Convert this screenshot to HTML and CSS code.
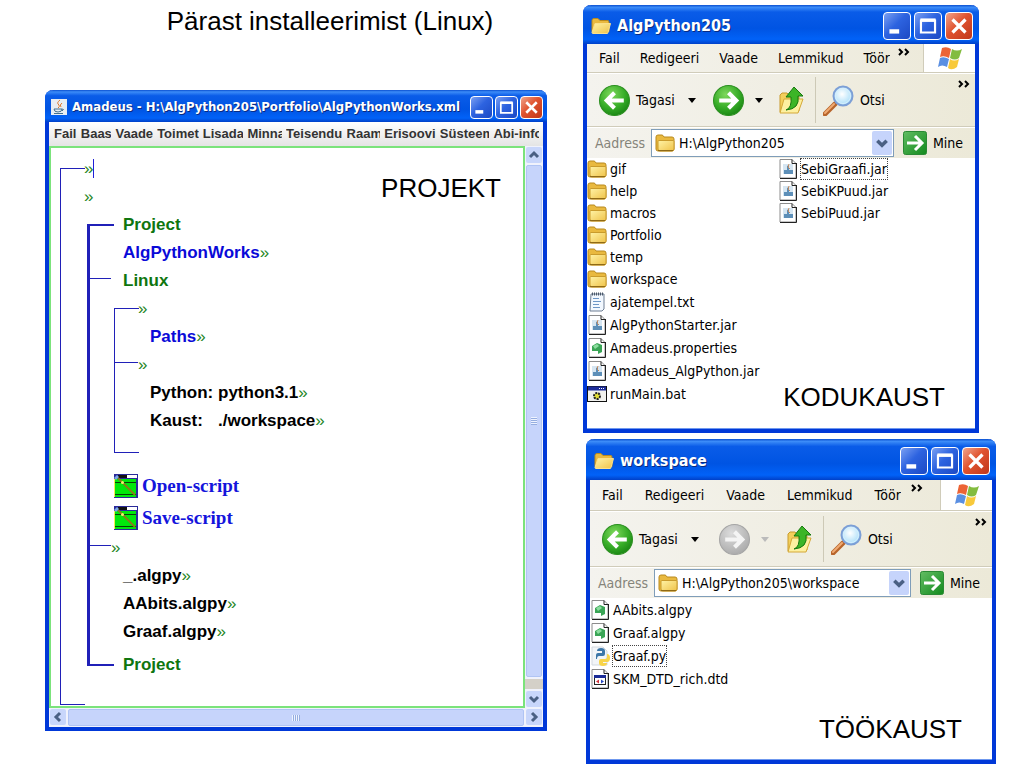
FILE: index.html
```html
<!DOCTYPE html>
<html lang="et">
<head>
<meta charset="utf-8">
<title>Pärast installeerimist (Linux)</title>
<link rel="stylesheet" href="styles.css">
</head>
<body>
<svg class="defs" aria-hidden="true">
  <defs>
    <linearGradient id="gFolder" x1="0" y1="0" x2="1" y2="1"><stop offset="0" stop-color="#fff3a6"/><stop offset="1" stop-color="#efc248"/></linearGradient>
    <radialGradient id="gGreen" cx=".4" cy=".3" r=".75"><stop offset="0" stop-color="#7fd85c"/><stop offset=".6" stop-color="#36ac27"/><stop offset="1" stop-color="#188312"/></radialGradient>
    <radialGradient id="gGrey" cx=".4" cy=".3" r=".75"><stop offset="0" stop-color="#dcdcdc"/><stop offset="1" stop-color="#a9a9a9"/></radialGradient>
    <radialGradient id="gLens" cx=".45" cy=".4" r=".6"><stop offset="0" stop-color="#fff"/><stop offset="1" stop-color="#a5dcf8"/></radialGradient>
    <linearGradient id="gGo" x1="0" y1="0" x2="1" y2="1"><stop offset="0" stop-color="#63bd63"/><stop offset="1" stop-color="#128a1d"/></linearGradient>
  </defs>
  <symbol id="folder" viewBox="0 0 20 18">
    <path d="M1 14V3q0-2 2-2h4q1 0 2 2h8q2 0 2 2v10q0 2-2 2H3q-2 0-2-2z" fill="#e9b93f" stroke="#b98a1e"/>
    <path d="M4 6.500h14q1 0 1 1V15q0 2-2 2H5q-2 0-2-2V7.500q0-1 1-1z" fill="url(#gFolder)" stroke="#c99b2c"/>
    <path d="M3 16.500h15" stroke="#8f6a16"/>
  </symbol>
  <symbol id="openfolder" viewBox="0 0 20 17">
    <path d="M1 14V3q0-2 2-2h4l2 2h8q1 0 1 2v9z" fill="#e9b93f" stroke="#b98a1e"/>
    <path d="M4 6h15.500L17 15q0 1-1 1H2q-1 0-1-1z" fill="url(#gFolder)" stroke="#fbe08b"/>
  </symbol>
  <symbol id="left" viewBox="0 0 30 30">
    <circle cx="15" cy="15" r="14.500" fill="url(#gGreen)" stroke="#2b8f20"/>
    <path d="M24 15H8M15 7.500L7.500 15l7.500 7.500" fill="none" stroke="#fff" stroke-width="4"/>
  </symbol>
  <symbol id="right" viewBox="0 0 30 30">
    <circle cx="15" cy="15" r="14.500" fill="url(#gGreen)" stroke="#2b8f20"/>
    <path d="M6 15h16M15 7.500l7.500 7.500-7.500 7.500" fill="none" stroke="#fff" stroke-width="4"/>
  </symbol>
  <symbol id="rightoff" viewBox="0 0 30 30">
    <circle cx="15" cy="15" r="14.500" fill="url(#gGrey)" stroke="#a5a5a5"/>
    <path d="M6 15h16M15 7.500l7.500 7.500-7.500 7.500" fill="none" stroke="#f4f4f4" stroke-width="4"/>
  </symbol>
  <symbol id="up" viewBox="0 0 26 30">
    <path d="M1 27V10l2-2h5l2 2h8l2 2v14z" fill="#f3cf5c" stroke="#c99b2c"/>
    <path d="M5 14h19l-5 14H1z" fill="#fdf0a0" stroke="#d4a838"/>
    <path d="M7 25q6-2 5-13H7L15 2l9 9h-5q2 13-12 14z" fill="#3cb527" stroke="#17780f"/>
  </symbol>
  <symbol id="search" viewBox="0 0 31 31">
    <path d="M12 19L2 29" stroke="#b8652b" stroke-width="5" stroke-linecap="round"/>
    <path d="M11 19L2 28" stroke="#f0ab73" stroke-width="2" stroke-linecap="round"/>
    <circle cx="20" cy="11" r="9.500" fill="url(#gLens)" stroke="#7c9fd6" stroke-width="2"/>
    <circle cx="20" cy="11" r="7.500" fill="none" stroke="#d6effd"/>
  </symbol>
  <symbol id="go" viewBox="0 0 24 24">
    <rect x=".5" y=".5" width="23" height="23" rx="2" fill="url(#gGo)" stroke="#2b8a35"/>
    <path d="M4 12h14M12 5l7 7-7 7" fill="none" stroke="#fff" stroke-width="3"/>
  </symbol>
  <symbol id="flag" viewBox="0 0 26 24">
    <path d="M5 2q5-2 9 1l-2 9q-5-3-9-1z" fill="#ec6335"/>
    <path d="M15 3q5 3 10 0l-3 9q-4 3-9 0z" fill="#83bc3f"/>
    <path d="M3 12q4-2 9 1l-2 8q-5-3-9 0z" fill="#5a8fe2"/>
    <path d="M13 13q4 3 9 0l-2 8q-5 4-9 1z" fill="#f8c93b"/>
  </symbol>
  <symbol id="jar" viewBox="0 0 18 20">
    <path d="M1 .500h12l4 4V19H1z" fill="#fff" stroke="#8c8c8c"/>
    <path d="M13 .500v4h4M17.500 4v15.500H1" fill="none" stroke="#222"/>
    <rect x="4" y="5" width="10" height="10" fill="#d6e6f2"/>
    <path d="M5 15v-4h3V7l2-1v5h4v4z" fill="#5d8fb8"/>
    <path d="M10 5l-1 3 2 2" fill="none" stroke="#c98a5a"/>
  </symbol>
  <symbol id="prop" viewBox="0 0 18 20">
    <path d="M1 .500h12l4 4V19H1z" fill="#fff" stroke="#8c8c8c"/>
    <path d="M13 .500v4h4M17.500 4v15.500H1" fill="none" stroke="#222"/>
    <path d="M4 8l5-3 5 2v7l-4 2v-3H4z" fill="#3aa556"/>
    <path d="M5 8l4-2 2 2-4 3z" fill="#8cdd9f"/>
  </symbol>
  <symbol id="txt" viewBox="0 0 18 20">
    <path d="M3 2h13v15l-2 2H2z" fill="#f2f8ff" stroke="#6f7f93"/>
    <path d="M4 2h12" stroke="#4b596b" stroke-width="3" stroke-dasharray="1 1"/>
    <path d="M5 6.500h6M5 9.500h8M5 12.500h6M5 15.500h7" stroke="#6d96c6"/>
  </symbol>
  <symbol id="bat" viewBox="0 0 20 18">
    <rect x=".5" y="1.500" width="19" height="15" fill="#f1f1ee" stroke="#111"/>
    <path d="M1 3.500h18" stroke="#1c2c9a" stroke-width="4"/>
    <path d="M12 3.500h6" stroke="#fff" stroke-dasharray="1 1"/>
    <circle cx="10" cy="11" r="3" fill="#e3df36" stroke="#222" stroke-width="2" stroke-dasharray="2 1"/>
  </symbol>
  <symbol id="py" viewBox="0 0 20 20">
    <path d="M2 1h11l4 4v14H2z" fill="#f2f5f8" stroke="#d3d9df"/>
    <path d="M6 13V9q0-2 2-2h4V5H7q0-3 4-3t4 3v3q0 2-2 2H9q-2 0-2 3z" fill="#3d77a8"/>
    <path d="M17 8q3 0 3 4t-3 4h-4v1h4q0 3-4 3t-4-3v-2q0-2 2-2h4q2 0 2-2z" fill="#f8d449"/>
  </symbol>
  <symbol id="dtd" viewBox="0 0 18 20">
    <path d="M1 .500h12l4 4V19H1z" fill="#fff" stroke="#8c8c8c"/>
    <path d="M13 .500v4h4M17.500 4v15.500H1" fill="none" stroke="#222"/>
    <rect x="3.500" y="6.500" width="11" height="9" fill="#fff" stroke="#222"/>
    <path d="M3 7.500h12" stroke="#1b2c97" stroke-width="3"/>
    <path d="M8 10.500l-3 2 3 2z" fill="#d4313b"/><path d="M10 10.500l3 2-3 2z" fill="#2848c0"/>
  </symbol>
  <symbol id="script" viewBox="0 0 24 24">
    <rect width="24" height="24" fill="#2a2a9a"/>
    <rect x="1" y="5" width="21" height="18" fill="#00e80b"/>
    <rect x="4" y="1" width="9" height="3" fill="#111"/>
    <rect x="13" y="1" width="10" height="3" fill="#fff"/>
    <path d="M1 8.500h21M1 20.500h21" stroke="#063f06"/>
    <path d="M.5 5v18" stroke="#f2ef54"/>
    <path d="M4 4l17 17" stroke="#8a7a1c" stroke-width="2"/>
    <path d="M0 4l3-3 2 2-3 3z" fill="#7ca8e8"/><circle cx="8.500" cy="8.500" r="1.500" fill="#f5f36a"/>
  </symbol>
  <symbol id="java" viewBox="0 0 16 16">
    <rect width="16" height="16" fill="#e8eef3"/>
    <path d="M9 1q-4 3-1 5 1 2-1 3M11 4q-3 2-1 4" fill="none" stroke="#e07a2c"/>
    <path d="M3 10h8q0 3-4 3t-4-3zM11 10q3 0 0 2M3 14.500h9" fill="none" stroke="#44708f"/>
  </symbol>
  <symbol id="min" viewBox="0 0 24 24"><rect x="5" y="15" width="9" height="4" fill="#fff"/></symbol>
  <symbol id="max" viewBox="0 0 24 24"><path d="M5.500 7h13v11h-13z" fill="none" stroke="#fff" stroke-width="2"/><path d="M5 6.500h14" stroke="#fff" stroke-width="3"/></symbol>
  <symbol id="close" viewBox="0 0 24 24"><path d="M6 6l12 12M18 6L6 18" stroke="#fff" stroke-width="3"/></symbol>
  <symbol id="chev" viewBox="0 0 12 12"><path d="M2 4l4 4 4-4" fill="none" stroke="#4a6084" stroke-width="3"/></symbol>
  <symbol id="more" viewBox="0 0 12 8"><path d="M1 1l3 3-3 3M7 1l3 3-3 3" fill="none" stroke="#000" stroke-width="2"/></symbol>
  <symbol id="drop" viewBox="0 0 8 5"><path d="M0 0h8L4 5z" fill="currentColor"/></symbol>
</svg>

<main class="slide">
  <section class="left">
    <h1 class="heading">Pärast installeerimist (Linux)</h1>

    <article class="window amadeus">
      <header class="titlebar">
        <svg class="app-icon"><use href="#java"/></svg>
        <h2 class="caption">Amadeus - H:\AlgPython205\Portfolio\AlgPythonWorks.xml</h2>
        <div class="controls">
          <button class="control" aria-label="Minimeeri"><svg><use href="#min"/></svg></button>
          <button class="control" aria-label="Maksimeeri"><svg><use href="#max"/></svg></button>
          <button class="control close" aria-label="Sulge"><svg><use href="#close"/></svg></button>
        </div>
      </header>
      <nav class="app-menu">
        <button>Fail</button><button>Baas</button><button>Vaade</button><button>Toimet</button><button>Lisada</button><button>Minna</button><button>Teisendu</button><button>Raam</button><button>Erisoovi</button><button>Süsteem</button><button>Abi-info</button>
      </nav>
      <div class="workarea">
        <div class="canvas">
          <div class="tree bracket">
            <p class="row at-stub caret"><i>»</i></p>
            <p class="row at-stub"><i>»</i></p>
            <div class="block bracket bold">
              <p class="row key">Project</p>
              <p class="row name">AlgPythonWorks<i>»</i></p>
              <p class="row key stub">Linux</p>
              <div class="block bracket inner">
                <p class="row at-stub"><i>»</i></p>
                <p class="row name">Paths<i>»</i></p>
                <p class="row at-stub stub"><i>»</i></p>
                <p class="row">Python: python3.1<i>»</i></p>
                <p class="row"><span class="term">Kaust:</span>./workspace<i>»</i></p>
              </div>
              <a class="script" href="#open"><svg><use href="#script"/></svg>Open-script</a>
              <a class="script" href="#save"><svg><use href="#script"/></svg>Save-script</a>
              <p class="row at-stub stub"><i>»</i></p>
              <p class="row">_.algpy<i>»</i></p>
              <p class="row">AAbits.algpy<i>»</i></p>
              <p class="row">Graaf.algpy<i>»</i></p>
              <p class="row key last">Project</p>
            </div>
          </div>
          <strong class="label over">PROJEKT</strong>
        </div>
        <div class="scroll vertical">
          <button aria-label="Üles"><svg class="turn-up"><use href="#chev"/></svg></button>
          <span class="thumb"></span>
          <span class="track"></span>
          <button aria-label="Alla"><svg><use href="#chev"/></svg></button>
        </div>
      </div>
      <div class="scroll">
        <button aria-label="Vasakule"><svg class="turn-left"><use href="#chev"/></svg></button>
        <span class="thumb"></span>
        <button aria-label="Paremale"><svg class="turn-right"><use href="#chev"/></svg></button>
      </div>
    </article>
  </section>

  <section class="right">
    <article class="window explorer home">
      <header class="titlebar">
        <svg class="app-icon"><use href="#openfolder"/></svg>
        <h2 class="caption">AlgPython205</h2>
        <div class="controls">
          <button class="control" aria-label="Minimeeri"><svg><use href="#min"/></svg></button>
          <button class="control" aria-label="Maksimeeri"><svg><use href="#max"/></svg></button>
          <button class="control close" aria-label="Sulge"><svg><use href="#close"/></svg></button>
        </div>
      </header>
      <nav class="menu">
        <button>Fail</button><button>Redigeeri</button><button>Vaade</button><button>Lemmikud</button><button class="cut">Tööriistad</button>
        <button class="more" aria-label="Veel"><svg><use href="#more"/></svg></button>
        <span class="brand"><svg><use href="#flag"/></svg></span>
      </nav>
      <div class="toolbar">
        <button class="tool back"><svg class="round"><use href="#left"/></svg>Tagasi<svg class="drop"><use href="#drop"/></svg></button>
        <button class="tool forward" aria-label="Edasi"><svg class="round"><use href="#right"/></svg><svg class="drop"><use href="#drop"/></svg></button>
        <button class="tool up" aria-label="Üles"><svg><use href="#up"/></svg></button>
        <button class="tool search"><svg class="round"><use href="#search"/></svg>Otsi</button>
        <button class="more" aria-label="Veel"><svg><use href="#more"/></svg></button>
      </div>
      <form class="address">
        <label for="path-home">Aadress</label>
        <div class="field"><svg class="file-icon"><use href="#folder"/></svg><input id="path-home" type="text" value="H:\AlgPython205"><button type="button" aria-label="Ava loend"><svg><use href="#chev"/></svg></button></div>
        <button class="go" type="button"><svg><use href="#go"/></svg>Mine</button>
      </form>
      <div class="files">
        <ul class="list">
          <li class="dir"><svg class="file-icon"><use href="#folder"/></svg><span>gif</span></li>
          <li class="dir"><svg class="file-icon"><use href="#folder"/></svg><span>help</span></li>
          <li class="dir"><svg class="file-icon"><use href="#folder"/></svg><span>macros</span></li>
          <li class="dir"><svg class="file-icon"><use href="#folder"/></svg><span>Portfolio</span></li>
          <li class="dir"><svg class="file-icon"><use href="#folder"/></svg><span>temp</span></li>
          <li class="dir"><svg class="file-icon"><use href="#folder"/></svg><span>workspace</span></li>
          <li><svg class="file-icon"><use href="#txt"/></svg><span>ajatempel.txt</span></li>
          <li><svg class="file-icon"><use href="#jar"/></svg><span>AlgPythonStarter.jar</span></li>
          <li><svg class="file-icon"><use href="#prop"/></svg><span>Amadeus.properties</span></li>
          <li><svg class="file-icon"><use href="#jar"/></svg><span>Amadeus_AlgPython.jar</span></li>
          <li><svg class="file-icon"><use href="#bat"/></svg><span>runMain.bat</span></li>
        </ul>
        <ul class="list">
          <li class="dir"><svg class="file-icon"><use href="#jar"/></svg><span class="focused">SebiGraafi.jar</span></li>
          <li class="dir"><svg class="file-icon"><use href="#jar"/></svg><span>SebiKPuud.jar</span></li>
          <li class="dir"><svg class="file-icon"><use href="#jar"/></svg><span>SebiPuud.jar</span></li>
        </ul>
        <strong class="label">KODUKAUST</strong>
      </div>
    </article>

    <article class="window explorer work">
      <header class="titlebar">
        <svg class="app-icon"><use href="#openfolder"/></svg>
        <h2 class="caption">workspace</h2>
        <div class="controls">
          <button class="control" aria-label="Minimeeri"><svg><use href="#min"/></svg></button>
          <button class="control" aria-label="Maksimeeri"><svg><use href="#max"/></svg></button>
          <button class="control close" aria-label="Sulge"><svg><use href="#close"/></svg></button>
        </div>
      </header>
      <nav class="menu">
        <button>Fail</button><button>Redigeeri</button><button>Vaade</button><button>Lemmikud</button><button class="cut">Tööriistad</button>
        <button class="more" aria-label="Veel"><svg><use href="#more"/></svg></button>
        <span class="brand"><svg><use href="#flag"/></svg></span>
      </nav>
      <div class="toolbar">
        <button class="tool back"><svg class="round"><use href="#left"/></svg>Tagasi<svg class="drop"><use href="#drop"/></svg></button>
        <button class="tool forward off" aria-label="Edasi" disabled><svg class="round"><use href="#rightoff"/></svg><svg class="drop"><use href="#drop"/></svg></button>
        <button class="tool up" aria-label="Üles"><svg><use href="#up"/></svg></button>
        <button class="tool search"><svg class="round"><use href="#search"/></svg>Otsi</button>
        <button class="more" aria-label="Veel"><svg><use href="#more"/></svg></button>
      </div>
      <form class="address">
        <label for="path-work">Aadress</label>
        <div class="field"><svg class="file-icon"><use href="#folder"/></svg><input id="path-work" type="text" value="H:\AlgPython205\workspace"><button type="button" aria-label="Ava loend"><svg><use href="#chev"/></svg></button></div>
        <button class="go" type="button"><svg><use href="#go"/></svg>Mine</button>
      </form>
      <div class="files">
        <ul class="list">
          <li><svg class="file-icon"><use href="#prop"/></svg><span>AAbits.algpy</span></li>
          <li><svg class="file-icon"><use href="#prop"/></svg><span>Graaf.algpy</span></li>
          <li><svg class="file-icon"><use href="#py"/></svg><span class="focused">Graaf.py</span></li>
          <li><svg class="file-icon"><use href="#dtd"/></svg><span>SKM_DTD_rich.dtd</span></li>
        </ul>
        <strong class="label">TÖÖKAUST</strong>
      </div>
    </article>
  </section>
</main>
</body>
</html>
```
FILE: styles.css
```css
* { box-sizing: border-box; }
body { margin: 0; background: #fff; color: #000; font: 14px/20px "DejaVu Sans Condensed", "DejaVu Sans", sans-serif; }
h1, h2, p, ul { margin: 0; padding: 0; font-weight: normal; }
button { margin: 0; padding: 0; border: 0; background: none; color: inherit; font: inherit; white-space: nowrap; }
svg { display: block; flex: none; }
.defs { position: absolute; width: 0; height: 0; }

.slide { display: grid; grid-template-columns: minmax(0, 502fr) minmax(0, 413fr); gap: 36px; padding: 5px 28px 4px 45px; }
.heading { padding-left: 68px; margin-bottom: 53px; text-align: center; font: 26px/32px "Liberation Sans", Arial, sans-serif; }
.label { font: 26px/32px "Liberation Sans", Arial, sans-serif; }

/* Window frame */
.window { display: flex; flex-direction: column; background: #fff; border: solid #0038d8; border-width: 0 4px 4px; border-radius: 8px 8px 0 0; box-shadow: inset 0 -1px #6f98ee; }
.titlebar { display: flex; align-items: center; margin: 0 -4px; padding: 0 6px 0 8px; border-radius: 8px 8px 0 0; background: linear-gradient(#0a4fd0, #3c8cf8 6%, #0a5ce8 18%, #0054e3 60%, #0162f8 88%, #0040c8); }
.caption { flex: 1; min-width: 0; overflow: hidden; white-space: nowrap; color: #fff; font: bold 16px/24px "DejaVu Sans Condensed", sans-serif; text-shadow: 1px 1px #0a2a80; }
.controls { display: flex; gap: 3px; }
.control { width: 28px; height: 28px; border: 1px solid #fff; border-radius: 4px; background: linear-gradient(135deg, #7ba0f2, #2d63e0 45%, #1c49c4); }
.control svg { width: 100%; height: 100%; }
.control.close { background: linear-gradient(135deg, #f0a48c, #e0532f 45%, #c0371a); }

/* Amadeus */
.amadeus .titlebar { height: 32px; padding: 2px 4px 0 6px; }
.amadeus .app-icon { width: 16px; height: 16px; margin-right: 5px; }
.amadeus .caption { font-size: 13px; }
.amadeus .control { width: 23px; height: 23px; }
.amadeus .controls { gap: 2px; }
.app-menu { display: grid; grid-template-columns: 27fr 35fr 42fr 46fr 45fr 39fr 61fr 38fr 56fr 54fr 46fr; height: 24px; padding: 0 4px 0 5px; background: linear-gradient(#fff, #e4e4e4); }
.app-menu button { min-width: 0; margin-right: 4px; overflow: hidden; text-align: left; color: #333; font: bold 13px/22px "Liberation Sans", Arial, sans-serif; }
.app-menu button:first-child, .app-menu button:last-child { margin-right: 0; }
.workarea { display: flex; }
.canvas { position: relative; flex: 1; border: 2px solid #7be37b; padding: 7px 0 1px 9px; }
.over { position: absolute; top: 24px; right: 22px; }

.bracket { position: relative; }
.bracket::before { content: ""; position: absolute; top: 13px; bottom: 0; left: 0; width: 24px; border: solid #2020b8; border-width: 1px 0 1px 1px; }
.bold::before { bottom: 13px; border-width: 2px 0 2px 3px; }
.tree { padding-bottom: 26px; }
.block { margin-left: 27px; }
.inner { padding-bottom: 18px; margin-bottom: 17px; }
.row { position: relative; height: 28px; padding-left: 36px; white-space: nowrap; font: bold 17px/28px "Liberation Sans", Arial, sans-serif; }
.row i { color: #1e861e; font-style: normal; font-weight: normal; }
.at-stub { padding-left: 24px; }
.caret i { border-right: 1px solid #2020d8; }
.key { color: #0f760f; }
.name { color: #0a0ad8; }
.last { margin-top: 5px; }
.stub::before { content: ""; position: absolute; top: 11px; left: 0; width: 24px; border-top: 1px solid #2020b8; }
.term { display: inline-block; min-width: 68px; }
.script { display: flex; align-items: center; gap: 4px; height: 32px; margin-left: 27px; color: #1414dc; text-decoration: none; font: bold 19px/32px "Liberation Serif", "Times New Roman", serif; }
.script svg { width: 24px; height: 24px; }

.scroll { display: flex; height: 19px; padding: 1px; gap: 2px; background: #f0f2fc; }
.scroll button { display: grid; place-items: center; width: 16px; height: 16px; flex: none; border-radius: 2px; background: #c8d6fb; }
.scroll svg { width: 12px; height: 12px; }
.turn-up { transform: rotate(180deg); }
.turn-left { transform: rotate(90deg); }
.turn-right { transform: rotate(-90deg); }
.thumb { flex: 1; display: grid; place-items: center; border: 1px solid #b0c4f4; border-radius: 2px; background: #c6d4fb; }
.thumb::after { content: ""; width: 8px; height: 6px; background: repeating-linear-gradient(90deg, #eef3ff 0 1px, #96aee0 1px 2px); }
.vertical { flex-direction: column; width: 18px; height: auto; }
.vertical .thumb::after { width: 6px; height: 8px; background: repeating-linear-gradient(#eef3ff 0 1px, #96aee0 1px 2px); }
.track { height: 10px; margin: 0 -1px; background: #d4d0c8; }

/* Explorer */
.right { display: flex; flex-direction: column; gap: 6px; }
.home { margin-right: 17px; }
.work { margin-left: 3px; }
.explorer .titlebar { height: 39px; padding-top: 3px; }
.explorer .app-icon { width: 20px; height: 18px; margin-right: 6px; }
.menu { display: flex; align-items: stretch; gap: 20px; height: 29px; padding-left: 12px; background: linear-gradient(90deg, #f4f3ee, #ece9d8); border-bottom: 1px solid #d0ccba; }
.menu .cut { flex: none; width: 27px; overflow: hidden; text-align: left; }
.more { align-self: flex-start; }
.more svg { width: 12px; height: 8px; }
.menu .more { margin: 4px 0 0 -12px; }
.menu .brand { display: grid; flex: none; place-items: center; width: 52px; margin-left: auto; background: #fff; border-left: 1px solid #d0ccba; }
.brand svg { width: 26px; height: 24px; }
.menu .more { margin-right: -12px; }
.toolbar { display: flex; align-items: center; height: 54px; padding: 0 5px 0 12px; background: linear-gradient(90deg, #f4f3ee, #ece9d8); border-top: 1px solid #fff; border-bottom: 1px solid #d0ccba; }
.tool { display: flex; align-items: center; gap: 6px; }
.round { width: 31px; height: 31px; }
.drop { width: 8px; height: 5px; }
.back .drop { margin-left: 7px; }
.forward { gap: 11px; margin-left: 17px; }
.off { color: #bbb; }
.up { height: 46px; margin-left: 16px; padding-right: 10px; border-right: 1px solid #cdc9b6; }
.up svg { width: 26px; height: 30px; }
.search { margin-left: 7px; }
.toolbar .more { margin: 6px 0 0 auto; }
.address { display: flex; align-items: center; height: 31px; padding: 0 12px 0 8px; border-top: 1px solid #fff; background: linear-gradient(90deg, #f4f3ee, #ece9d8); }
.address label { color: #85847a; }
.field { display: flex; align-items: center; flex: 1; min-width: 0; height: 28px; margin: 0 9px 0 6px; padding: 0 1px 0 3px; border: 1px solid #7f9db9; background: #fff; }
.field input { flex: 1; min-width: 0; height: 24px; margin: 0; padding: 0 0 0 4px; border: 0; background: none; color: #000; font: inherit; }
.field button { display: grid; place-items: center; width: 20px; height: 24px; border-radius: 2px; background: #c6d4fb; }
.field button svg { width: 14px; height: 14px; }
.go { display: flex; align-items: center; gap: 6px; }
.go svg { width: 24px; height: 24px; }
.file-icon { width: 20px; height: 20px; }
.files { display: grid; grid-template-columns: 191fr 197fr; flex: 1; padding-bottom: 16px; }
.list { list-style: none; }
.list li { display: flex; align-items: center; gap: 3px; height: 23px; white-space: nowrap; }
.list .dir { height: 22px; }
.focused { outline: 1px dotted #444; }
.files .label { grid-column: 1 / -1; justify-self: end; }
.home .label { margin: -24px 30px 0 0; }

.work .titlebar { height: 41px; }
.work .menu { height: 31px; gap: 22px; }
.work .toolbar { height: 56px; }
.work .forward { margin-left: 20px; }
.work .up { margin-left: 18px; }
.work .files { grid-template-columns: 1fr; padding-bottom: 15px; }
.work .label { margin: 23px 30px 0 0; }
```
